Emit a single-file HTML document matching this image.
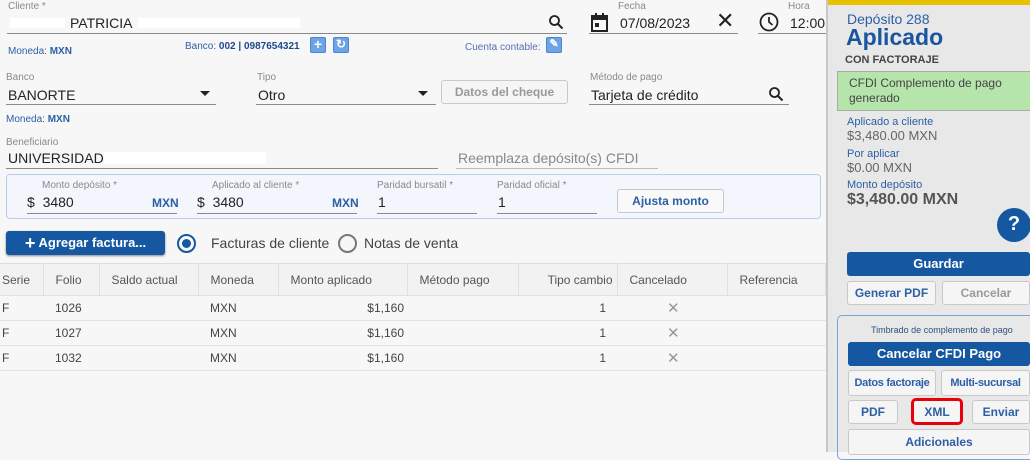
<!DOCTYPE html>
<html><head><meta charset="utf-8"><style>
*{box-sizing:border-box;margin:0;padding:0}
body{width:1030px;height:452px;overflow:hidden;background:#f7f7f7;font-family:"Liberation Sans",sans-serif;position:relative;color:#222}
.a{position:absolute;white-space:nowrap}
.lbl{font-size:10px;color:#8a8a8a}
.val{font-size:14px;color:#222}
.ul{position:absolute;height:1px;background:#8a8a8a}
.blue{color:#2c5fa5}
.btn{position:absolute;border:1px solid #c8c8c8;border-radius:3px;background:#f5f5f5;font-size:12px;font-weight:bold;color:#2c5fa5;text-align:center;white-space:nowrap;overflow:hidden;font-family:"Liberation Sans",sans-serif}
.pbtn{position:absolute;background:#1557a0;color:#fff;border-radius:3px;font-weight:bold;text-align:center;white-space:nowrap;font-family:"Liberation Sans",sans-serif}
.sq{position:absolute;width:16px;height:16px;background:#6ea4e6;border-radius:2px;border:1px solid #4a86d4;color:#fff;font-size:14px;line-height:13px;text-align:center;font-weight:bold}
table{position:absolute;left:0;top:263px;width:826px;border-collapse:collapse;font-size:12px;color:#444;font-family:"Liberation Sans Narrow","Liberation Sans",sans-serif}
th{height:32px;font-weight:normal;background:#f2f2f2;border:1px solid #e0e0e0;border-top:1px solid #ddd;color:#555;text-align:left;padding-left:12px}
td{height:25px;border-bottom:1px solid #e2e2e2;padding-left:12px}
</style></head><body>
<div class="a lbl" style="left:8px;top:1px">Cliente *</div>
<div class="a val" style="left:70px;top:15px">PATRICIA</div>
<div class="a" style="left:10px;top:18px;width:55px;height:10px;background:#fff"></div>
<div class="a" style="left:138px;top:18px;width:162px;height:10px;background:#fff"></div>
<svg class="a" style="left:548px;top:14px" width="16" height="16" viewBox="0 0 16 16"><circle cx="6.5" cy="6.5" r="4.5" fill="none" stroke="#222" stroke-width="1.8"/><path d="M10 10l4.5 4.5" stroke="#222" stroke-width="2"/></svg>
<div class="ul" style="left:7px;top:33px;width:560px"></div>
<div class="a blue" style="left:8px;top:46px;font-size:10px">Moneda: <b>MXN</b></div>
<div class="a blue" style="left:185px;top:41px;font-size:10px">Banco: <b style="color:#1e4a8a">002 | 0987654321</b></div>
<div class="sq" style="left:310px;top:37px">+</div>
<div class="sq" style="left:333px;top:37px;font-size:12px">↻</div>
<div class="a blue" style="left:465px;top:42px;font-size:10px;color:#5a6fb5">Cuenta contable:</div>
<div class="sq" style="left:546px;top:37px;font-size:11px">✎</div>
<svg class="a" style="left:590px;top:13px" width="20" height="20" viewBox="0 0 20 20"><rect x="2" y="3" width="15" height="15" fill="none" stroke="#222" stroke-width="2"/><rect x="2" y="3" width="15" height="4" fill="#222"/><rect x="5" y="0" width="2" height="4" fill="#222"/><rect x="12" y="0" width="2" height="4" fill="#222"/><rect x="5" y="10" width="4" height="4" fill="#222"/></svg>
<div class="a lbl" style="left:618px;top:1px">Fecha</div>
<div class="a val" style="left:620px;top:15px">07/08/2023</div>
<div class="a" style="left:716px;top:8px;font-size:22px;color:#222">✕</div>
<div class="ul" style="left:589px;top:33px;width:149px"></div>
<svg class="a" style="left:759px;top:12px" width="20" height="20" viewBox="0 0 20 20"><circle cx="10" cy="10" r="8.5" fill="none" stroke="#222" stroke-width="1.8"/><path d="M10 5v5l3.5 3" fill="none" stroke="#222" stroke-width="1.8"/></svg>
<div class="a lbl" style="left:788px;top:1px">Hora</div>
<div class="a val" style="left:790px;top:15px">12:00</div>
<div class="ul" style="left:758px;top:33px;width:68px"></div>
<div class="a lbl" style="left:6px;top:72px">Banco</div>
<div class="a val" style="left:8px;top:87px">BANORTE</div>
<div class="a" style="left:200px;top:91px;border:5px solid transparent;border-top:5px solid #222"></div>
<div class="ul" style="left:6px;top:104px;width:210px"></div>
<div class="a lbl" style="left:257px;top:72px">Tipo</div>
<div class="a val" style="left:258px;top:87px">Otro</div>
<div class="a" style="left:418px;top:91px;border:5px solid transparent;border-top:5px solid #222"></div>
<div class="ul" style="left:256px;top:104px;width:180px"></div>
<div class="btn" style="left:441px;top:80px;width:127px;height:24px;line-height:22px;color:#999">Datos del cheque</div>
<div class="a lbl" style="left:590px;top:72px">Método de pago</div>
<div class="a val" style="left:591px;top:87px">Tarjeta de crédito</div>
<svg class="a" style="left:768px;top:86px" width="16" height="16" viewBox="0 0 16 16"><circle cx="6.5" cy="6.5" r="4.5" fill="none" stroke="#222" stroke-width="1.8"/><path d="M10 10l4.5 4.5" stroke="#222" stroke-width="2"/></svg>
<div class="ul" style="left:589px;top:104px;width:200px"></div>
<div class="a blue" style="left:6px;top:114px;font-size:10px">Moneda: <b>MXN</b></div>
<div class="a lbl" style="left:6px;top:137px">Beneficiario</div>
<div class="a val" style="left:8px;top:150px">UNIVERSIDAD .</div>
<div class="a" style="left:104px;top:152px;width:162px;height:12px;background:#fff"></div>
<div class="ul" style="left:6px;top:168px;width:432px"></div>
<div class="a" style="left:458px;top:150px;font-size:14px;color:#888">Reemplaza depósito(s) CFDI</div>
<div class="ul" style="left:456px;top:168px;width:202px;background:#bbb"></div>
<div class="a" style="left:6px;top:174px;width:815px;height:45px;border:1px solid #b8ccec;border-radius:4px;background:#f3f6fc"></div>
<div class="a lbl" style="left:42px;top:180px">Monto depósito *</div>
<div class="a val" style="left:27px;top:194px">$&nbsp;&nbsp;3480</div>
<div class="a blue" style="left:152px;top:196px;font-size:12px;font-weight:bold">MXN</div>
<div class="ul" style="left:27px;top:213px;width:150px"></div>
<div class="a lbl" style="left:212px;top:180px">Aplicado al cliente *</div>
<div class="a val" style="left:197px;top:194px">$&nbsp;&nbsp;3480</div>
<div class="a blue" style="left:332px;top:196px;font-size:12px;font-weight:bold">MXN</div>
<div class="ul" style="left:197px;top:213px;width:160px"></div>
<div class="a lbl" style="left:377px;top:180px">Paridad bursatil *</div>
<div class="a val" style="left:378px;top:194px">1</div>
<div class="ul" style="left:377px;top:213px;width:100px"></div>
<div class="a lbl" style="left:497px;top:180px">Paridad oficial *</div>
<div class="a val" style="left:498px;top:194px">1</div>
<div class="ul" style="left:497px;top:213px;width:100px"></div>
<div class="btn" style="left:617px;top:189px;width:107px;height:24px;line-height:22px;background:#f9f9f9">Ajusta monto</div>
<div class="pbtn" style="left:6px;top:231px;width:159px;height:24px;line-height:24px;font-size:13px;box-shadow:0 1px 2px #888"><span style="font-size:18px;vertical-align:-2px">+</span> Agregar factura...</div>
<div class="a" style="left:177px;top:234px;width:19px;height:19px;border:2px solid #1557a0;border-radius:50%"></div>
<div class="a" style="left:182px;top:239px;width:9px;height:9px;background:#1557a0;border-radius:50%"></div>
<div class="a" style="left:211px;top:235px;font-size:14px;color:#444">Facturas de cliente</div>
<div class="a" style="left:338px;top:234px;width:19px;height:19px;border:2px solid #777;border-radius:50%"></div>
<div class="a" style="left:364px;top:235px;font-size:14px;color:#444">Notas de venta</div>
<table>
<tr><th style="width:43px;padding-left:2px;border-left:0">Serie</th><th style="width:56px">Folio</th><th style="width:99px">Saldo actual</th><th style="width:80px">Moneda</th><th style="width:129px">Monto aplicado</th><th style="width:111px">Método pago</th><th style="width:99px;text-align:right;padding-right:4px">Tipo cambio</th><th style="width:110px">Cancelado</th><th>Referencia</th></tr>
<tr><td style="padding-left:2px">F</td><td>1026</td><td></td><td>MXN</td><td style="text-align:right;padding-right:3px">$1,160</td><td></td><td style="text-align:right;padding-right:11px">1</td><td style="padding-left:50px;color:#999;font-size:15px">✕</td><td></td></tr>
<tr><td style="padding-left:2px">F</td><td>1027</td><td></td><td>MXN</td><td style="text-align:right;padding-right:3px">$1,160</td><td></td><td style="text-align:right;padding-right:11px">1</td><td style="padding-left:50px;color:#999;font-size:15px">✕</td><td></td></tr>
<tr><td style="padding-left:2px">F</td><td>1032</td><td></td><td>MXN</td><td style="text-align:right;padding-right:3px">$1,160</td><td></td><td style="text-align:right;padding-right:11px">1</td><td style="padding-left:50px;color:#999;font-size:15px">✕</td><td></td></tr>
</table>
<div class="a" style="left:826px;top:0;width:204px;height:452px;background:#e8e8e8;border-left:2px solid #c8c8c8"></div>
<div class="a" style="left:828px;top:0;width:202px;height:5px;background:#e8c200"></div>
<div class="a" style="left:847px;top:11px;font-size:14px;color:#2c5fa5">Depósito 288</div>
<div class="a" style="left:846px;top:24px;font-size:23px;font-weight:bold;color:#1a55a0">Aplicado</div>
<div class="a" style="left:845px;top:54px;font-size:11px;font-weight:bold;color:#444">CON FACTORAJE</div>
<div class="a" style="left:837px;top:71px;width:193px;height:40px;background:#b5e5ab;border:1px solid #aaa;border-right:0;padding:4px 0 0 11px;font-size:12px;color:#444;white-space:normal;line-height:15px">CFDI Complemento de pago<br>generado</div>
<div class="a" style="left:847px;top:116px;font-size:11px;color:#2c5fa5">Aplicado a cliente</div>
<div class="a" style="left:847px;top:128px;font-size:13px;color:#666">$3,480.00 MXN</div>
<div class="a" style="left:847px;top:148px;font-size:11px;color:#2c5fa5">Por aplicar</div>
<div class="a" style="left:847px;top:160px;font-size:13px;color:#666">$0.00 MXN</div>
<div class="a" style="left:847px;top:179px;font-size:11px;color:#2c5fa5">Monto depósito</div>
<div class="a" style="left:847px;top:191px;font-size:16px;font-weight:bold;color:#555">$3,480.00 MXN</div>
<div class="a" style="left:997px;top:208px;width:34px;height:34px;border-radius:50%;background:#1557a0;color:#fff;font-weight:bold;font-size:20px;text-align:center;line-height:32px">?</div>
<div class="pbtn" style="left:847px;top:252px;width:183px;height:24px;line-height:24px;font-size:13px">Guardar</div>
<div class="btn" style="left:847px;top:281px;width:89px;height:24px;line-height:22px">Generar PDF</div>
<div class="btn" style="left:942px;top:281px;width:88px;height:24px;line-height:22px;color:#999">Cancelar</div>
<div class="a" style="left:837px;top:315px;width:200px;height:145px;border:1px solid #7aa2d8;border-radius:5px"></div>
<div class="a" style="left:871px;top:325px;font-size:9px;color:#2c4f80">Timbrado de complemento de pago</div>
<div class="pbtn" style="left:848px;top:342px;width:182px;height:24px;line-height:24px;font-size:13px">Cancelar CFDI Pago</div>
<div class="btn" style="left:848px;top:370px;width:88px;height:26px;line-height:24px;font-size:11px;letter-spacing:-0.3px">Datos factoraje</div>
<div class="btn" style="left:941px;top:370px;width:89px;height:26px;line-height:24px;font-size:11px;letter-spacing:-0.3px">Multi-sucursal</div>
<div class="btn" style="left:848px;top:400px;width:50px;height:24px;line-height:22px">PDF</div>
<div class="btn" style="left:911px;top:398px;width:52px;height:27px;line-height:23px;border:3px solid #e8000b;border-radius:5px">XML</div>
<div class="btn" style="left:972px;top:400px;width:58px;height:24px;line-height:22px">Enviar</div>
<div class="btn" style="left:848px;top:429px;width:182px;height:26px;line-height:24px">Adicionales</div>
</body></html>
